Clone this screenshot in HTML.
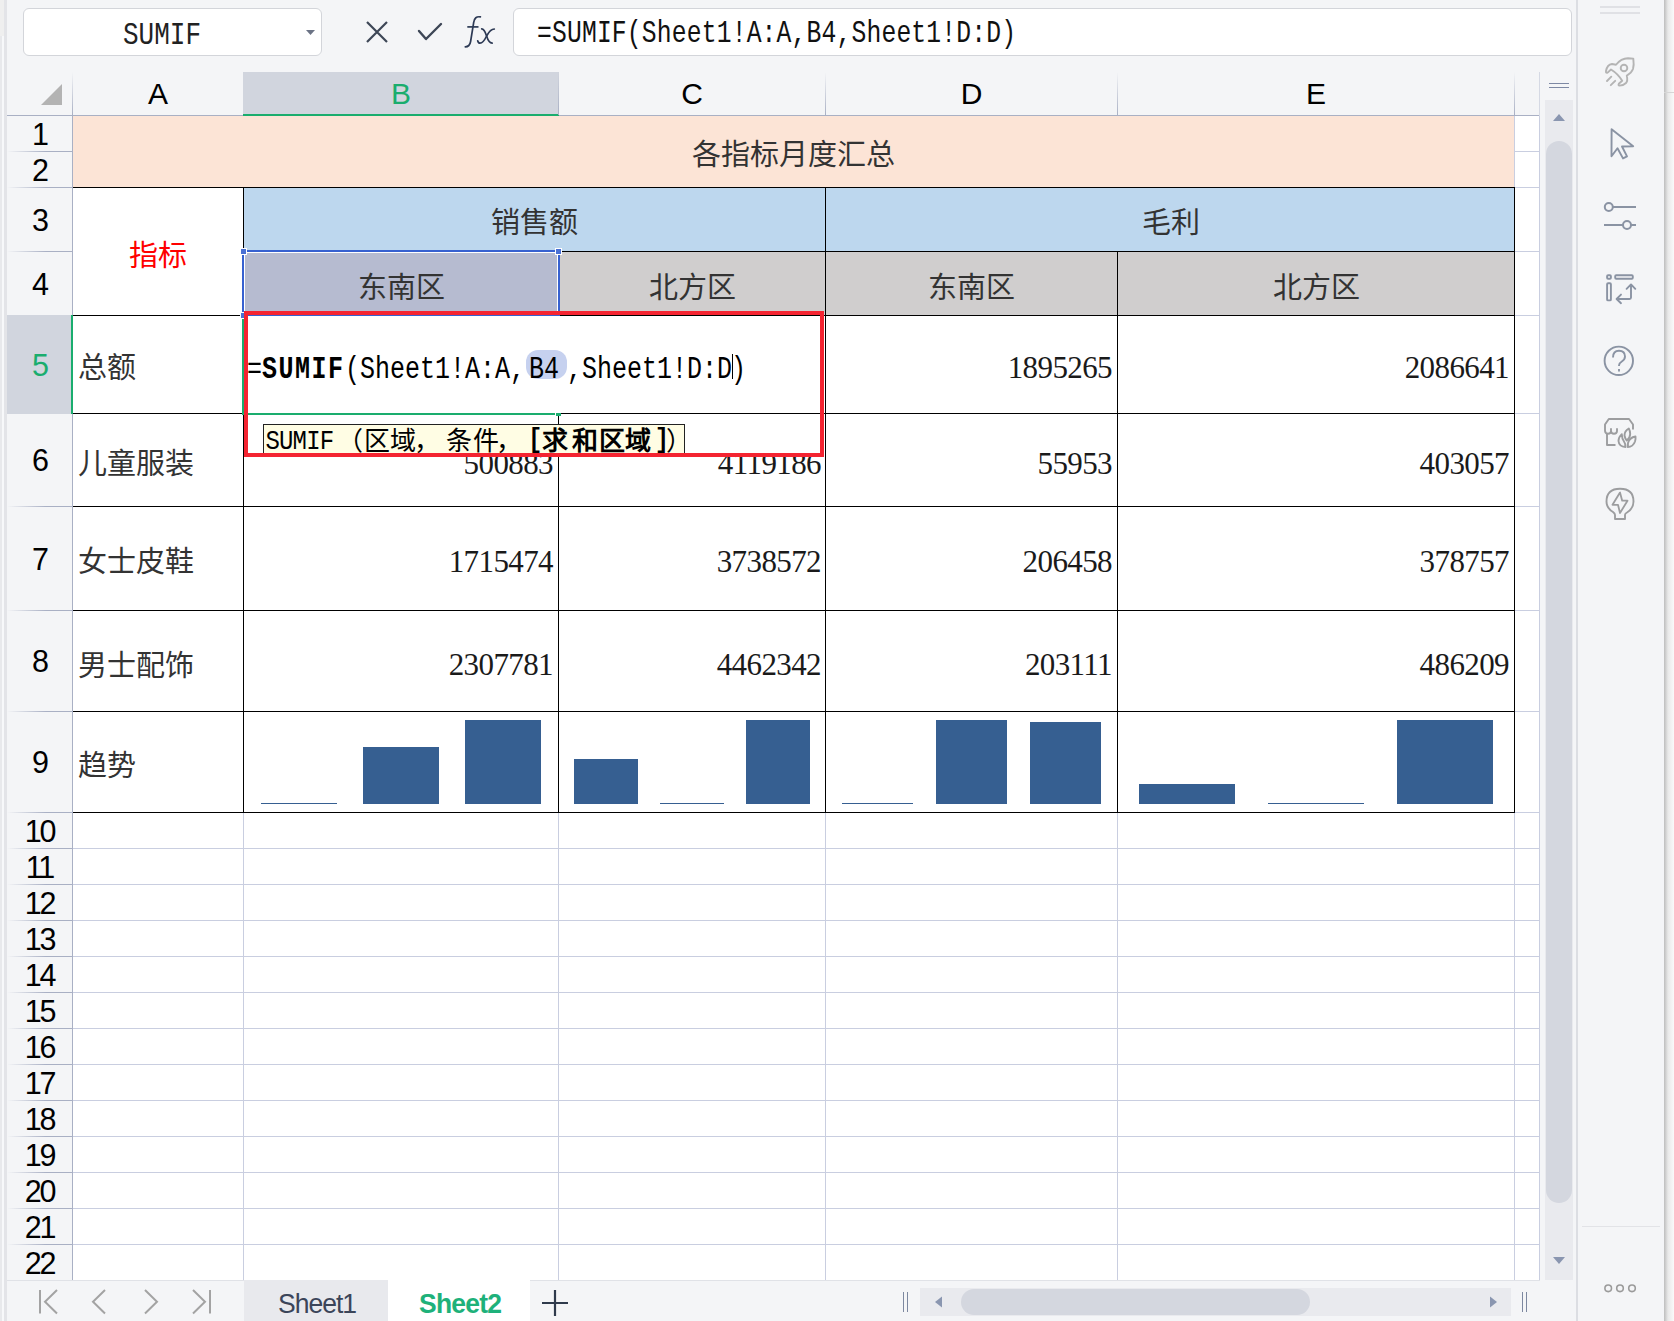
<!DOCTYPE html>
<html lang="zh-CN"><head><meta charset="utf-8"><title>Sheet</title>
<style>
html,body{margin:0;padding:0;}
body{width:1674px;height:1321px;overflow:hidden;position:relative;background:#f4f5f7;font-family:'Liberation Sans',sans-serif;}
</style></head><body>
<div style="position:absolute;left:0px;top:0px;width:2px;height:1321px;background:#e8e9ec"></div>
<div style="position:absolute;left:2px;top:0px;width:2px;height:1321px;background:#f7f8fa"></div>
<div style="position:absolute;left:0px;top:0px;width:4px;height:36px;background:#efefef"></div>
<div style="position:absolute;left:4px;top:0px;width:3px;height:1321px;background:#e3e4e8"></div>
<div style="position:absolute;left:73px;top:116px;width:1467px;height:1164px;background:#fff"></div>
<div style="position:absolute;left:243px;top:72px;width:316px;height:42px;background:#d1d5de"></div>
<div style="position:absolute;left:243px;top:114px;width:316px;height:2px;background:#1aad6e"></div>
<div style="position:absolute;left:7px;top:115px;width:236px;height:1px;background:#a9b0c4"></div>
<div style="position:absolute;left:559px;top:115px;width:981px;height:1px;background:#a9b0c4"></div>
<div style="position:absolute;left:558px;top:72px;width:1px;height:43px;background:linear-gradient(to bottom, rgba(169,176,196,0), #a9b0c4)"></div>
<div style="position:absolute;left:825px;top:72px;width:1px;height:43px;background:linear-gradient(to bottom, rgba(169,176,196,0), #a9b0c4)"></div>
<div style="position:absolute;left:1117px;top:72px;width:1px;height:43px;background:linear-gradient(to bottom, rgba(169,176,196,0), #a9b0c4)"></div>
<div style="position:absolute;left:1514px;top:72px;width:1px;height:43px;background:linear-gradient(to bottom, rgba(169,176,196,0), #a9b0c4)"></div>
<div style="position:absolute;left:1539px;top:72px;width:1px;height:43px;background:linear-gradient(to bottom, rgba(169,176,196,0), #a9b0c4)"></div>
<div style="position:absolute;left:72px;top:72px;width:1px;height:43px;background:linear-gradient(to bottom, rgba(169,176,196,0), #a9b0c4)"></div>
<div style="position:absolute;left:72px;top:115px;width:1px;height:1165px;background:#a9b0c4"></div>
<div style="position:absolute;left:7px;top:151px;width:65px;height:1px;background:linear-gradient(to right, rgba(169,176,196,0), #a9b0c4 60%)"></div>
<div style="position:absolute;left:7px;top:187px;width:65px;height:1px;background:linear-gradient(to right, rgba(169,176,196,0), #a9b0c4 60%)"></div>
<div style="position:absolute;left:7px;top:251px;width:65px;height:1px;background:linear-gradient(to right, rgba(169,176,196,0), #a9b0c4 60%)"></div>
<div style="position:absolute;left:7px;top:315px;width:65px;height:1px;background:linear-gradient(to right, rgba(169,176,196,0), #a9b0c4 60%)"></div>
<div style="position:absolute;left:7px;top:413px;width:65px;height:1px;background:linear-gradient(to right, rgba(169,176,196,0), #a9b0c4 60%)"></div>
<div style="position:absolute;left:7px;top:506px;width:65px;height:1px;background:linear-gradient(to right, rgba(169,176,196,0), #a9b0c4 60%)"></div>
<div style="position:absolute;left:7px;top:610px;width:65px;height:1px;background:linear-gradient(to right, rgba(169,176,196,0), #a9b0c4 60%)"></div>
<div style="position:absolute;left:7px;top:711px;width:65px;height:1px;background:linear-gradient(to right, rgba(169,176,196,0), #a9b0c4 60%)"></div>
<div style="position:absolute;left:7px;top:812px;width:65px;height:1px;background:linear-gradient(to right, rgba(169,176,196,0), #a9b0c4 60%)"></div>
<div style="position:absolute;left:7px;top:848px;width:65px;height:1px;background:linear-gradient(to right, rgba(169,176,196,0), #a9b0c4 60%)"></div>
<div style="position:absolute;left:7px;top:884px;width:65px;height:1px;background:linear-gradient(to right, rgba(169,176,196,0), #a9b0c4 60%)"></div>
<div style="position:absolute;left:7px;top:920px;width:65px;height:1px;background:linear-gradient(to right, rgba(169,176,196,0), #a9b0c4 60%)"></div>
<div style="position:absolute;left:7px;top:956px;width:65px;height:1px;background:linear-gradient(to right, rgba(169,176,196,0), #a9b0c4 60%)"></div>
<div style="position:absolute;left:7px;top:992px;width:65px;height:1px;background:linear-gradient(to right, rgba(169,176,196,0), #a9b0c4 60%)"></div>
<div style="position:absolute;left:7px;top:1028px;width:65px;height:1px;background:linear-gradient(to right, rgba(169,176,196,0), #a9b0c4 60%)"></div>
<div style="position:absolute;left:7px;top:1064px;width:65px;height:1px;background:linear-gradient(to right, rgba(169,176,196,0), #a9b0c4 60%)"></div>
<div style="position:absolute;left:7px;top:1100px;width:65px;height:1px;background:linear-gradient(to right, rgba(169,176,196,0), #a9b0c4 60%)"></div>
<div style="position:absolute;left:7px;top:1136px;width:65px;height:1px;background:linear-gradient(to right, rgba(169,176,196,0), #a9b0c4 60%)"></div>
<div style="position:absolute;left:7px;top:1172px;width:65px;height:1px;background:linear-gradient(to right, rgba(169,176,196,0), #a9b0c4 60%)"></div>
<div style="position:absolute;left:7px;top:1208px;width:65px;height:1px;background:linear-gradient(to right, rgba(169,176,196,0), #a9b0c4 60%)"></div>
<div style="position:absolute;left:7px;top:1244px;width:65px;height:1px;background:linear-gradient(to right, rgba(169,176,196,0), #a9b0c4 60%)"></div>
<div style="position:absolute;left:7px;top:1280px;width:65px;height:1px;background:linear-gradient(to right, rgba(169,176,196,0), #a9b0c4 60%)"></div>
<div style="position:absolute;left:7px;top:315px;width:64px;height:99px;background:#d1d5de"></div>
<div style="position:absolute;left:71px;top:315px;width:2px;height:99px;background:#1aad6e"></div>
<svg style="position:absolute;left:0;top:0" width="80" height="115"><polygon points="62,84 62,105 41,105" fill="#b3b3b3"/></svg>
<div style="position:absolute;left:1514px;top:151px;width:25px;height:1px;background:#c9cee0"></div>
<div style="position:absolute;left:1514px;top:187px;width:25px;height:1px;background:#c9cee0"></div>
<div style="position:absolute;left:1514px;top:251px;width:25px;height:1px;background:#c9cee0"></div>
<div style="position:absolute;left:1514px;top:315px;width:25px;height:1px;background:#c9cee0"></div>
<div style="position:absolute;left:1514px;top:413px;width:25px;height:1px;background:#c9cee0"></div>
<div style="position:absolute;left:1514px;top:506px;width:25px;height:1px;background:#c9cee0"></div>
<div style="position:absolute;left:1514px;top:610px;width:25px;height:1px;background:#c9cee0"></div>
<div style="position:absolute;left:1514px;top:711px;width:25px;height:1px;background:#c9cee0"></div>
<div style="position:absolute;left:1514px;top:812px;width:25px;height:1px;background:#c9cee0"></div>
<div style="position:absolute;left:73px;top:848px;width:1467px;height:1px;background:#c9cee0"></div>
<div style="position:absolute;left:73px;top:884px;width:1467px;height:1px;background:#c9cee0"></div>
<div style="position:absolute;left:73px;top:920px;width:1467px;height:1px;background:#c9cee0"></div>
<div style="position:absolute;left:73px;top:956px;width:1467px;height:1px;background:#c9cee0"></div>
<div style="position:absolute;left:73px;top:992px;width:1467px;height:1px;background:#c9cee0"></div>
<div style="position:absolute;left:73px;top:1028px;width:1467px;height:1px;background:#c9cee0"></div>
<div style="position:absolute;left:73px;top:1064px;width:1467px;height:1px;background:#c9cee0"></div>
<div style="position:absolute;left:73px;top:1100px;width:1467px;height:1px;background:#c9cee0"></div>
<div style="position:absolute;left:73px;top:1136px;width:1467px;height:1px;background:#c9cee0"></div>
<div style="position:absolute;left:73px;top:1172px;width:1467px;height:1px;background:#c9cee0"></div>
<div style="position:absolute;left:73px;top:1208px;width:1467px;height:1px;background:#c9cee0"></div>
<div style="position:absolute;left:73px;top:1244px;width:1467px;height:1px;background:#c9cee0"></div>
<div style="position:absolute;left:73px;top:1280px;width:1467px;height:1px;background:#c9cee0"></div>
<div style="position:absolute;left:243px;top:812px;width:1px;height:468px;background:#c9cee0"></div>
<div style="position:absolute;left:558px;top:812px;width:1px;height:468px;background:#c9cee0"></div>
<div style="position:absolute;left:825px;top:812px;width:1px;height:468px;background:#c9cee0"></div>
<div style="position:absolute;left:1117px;top:812px;width:1px;height:468px;background:#c9cee0"></div>
<div style="position:absolute;left:1514px;top:812px;width:1px;height:468px;background:#c9cee0"></div>
<div style="position:absolute;left:1539px;top:72px;width:1px;height:44px;background:#d5d9e4"></div>
<div style="position:absolute;left:1539px;top:116px;width:1px;height:1164px;background:#c9cee0"></div>
<div style="position:absolute;left:1514px;top:116px;width:1px;height:71px;background:#c9cee0"></div>
<div style="position:absolute;left:73px;top:116px;width:1441px;height:71px;background:#fce4d6"></div>
<div style="position:absolute;left:244px;top:188px;width:1270px;height:63px;background:#bdd7ee"></div>
<div style="position:absolute;left:244px;top:252px;width:1270px;height:63px;background:#d0cece"></div>
<div style="position:absolute;left:244px;top:252px;width:314px;height:63px;background:#b6bbd0"></div>
<div style="position:absolute;left:73px;top:187px;width:1442px;height:1px;background:#000"></div>
<div style="position:absolute;left:243px;top:251px;width:1272px;height:1px;background:#000"></div>
<div style="position:absolute;left:73px;top:315px;width:1442px;height:1px;background:#000"></div>
<div style="position:absolute;left:73px;top:413px;width:1442px;height:1px;background:#000"></div>
<div style="position:absolute;left:73px;top:506px;width:1442px;height:1px;background:#000"></div>
<div style="position:absolute;left:73px;top:610px;width:1442px;height:1px;background:#000"></div>
<div style="position:absolute;left:73px;top:711px;width:1442px;height:1px;background:#000"></div>
<div style="position:absolute;left:73px;top:812px;width:1442px;height:1px;background:#000"></div>
<div style="position:absolute;left:243px;top:187px;width:1px;height:626px;background:#000"></div>
<div style="position:absolute;left:558px;top:251px;width:1px;height:562px;background:#000"></div>
<div style="position:absolute;left:825px;top:187px;width:1px;height:626px;background:#000"></div>
<div style="position:absolute;left:1117px;top:251px;width:1px;height:562px;background:#000"></div>
<div style="position:absolute;left:1514px;top:187px;width:1px;height:626px;background:#000"></div>
<div style="position:absolute;left:58.0px;top:72px;width:200px;text-align:center;white-space:nowrap;font-family:'Liberation Sans',sans-serif;font-size:30px;line-height:44px;color:#000;color:#000;">A</div>
<div style="position:absolute;left:301.0px;top:72px;width:200px;text-align:center;white-space:nowrap;font-family:'Liberation Sans',sans-serif;font-size:30px;line-height:44px;color:#000;color:#1aad6e;">B</div>
<div style="position:absolute;left:592.0px;top:72px;width:200px;text-align:center;white-space:nowrap;font-family:'Liberation Sans',sans-serif;font-size:30px;line-height:44px;color:#000;color:#000;">C</div>
<div style="position:absolute;left:871.5px;top:72px;width:200px;text-align:center;white-space:nowrap;font-family:'Liberation Sans',sans-serif;font-size:30px;line-height:44px;color:#000;color:#000;">D</div>
<div style="position:absolute;left:1216.0px;top:72px;width:200px;text-align:center;white-space:nowrap;font-family:'Liberation Sans',sans-serif;font-size:30px;line-height:44px;color:#000;color:#000;">E</div>
<div style="position:absolute;left:7px;top:115px;width:65px;height:36px;display:flex;align-items:center;justify-content:center;padding-top:2px;box-sizing:border-box;font-family:'Liberation Sans',sans-serif;font-size:30.5px;color:#000;letter-spacing:-2.2px;color:#000;">1</div>
<div style="position:absolute;left:7px;top:151px;width:65px;height:36px;display:flex;align-items:center;justify-content:center;padding-top:2px;box-sizing:border-box;font-family:'Liberation Sans',sans-serif;font-size:30.5px;color:#000;letter-spacing:-2.2px;color:#000;">2</div>
<div style="position:absolute;left:7px;top:187px;width:65px;height:64px;display:flex;align-items:center;justify-content:center;padding-top:2px;box-sizing:border-box;font-family:'Liberation Sans',sans-serif;font-size:30.5px;color:#000;letter-spacing:-2.2px;color:#000;">3</div>
<div style="position:absolute;left:7px;top:251px;width:65px;height:64px;display:flex;align-items:center;justify-content:center;padding-top:2px;box-sizing:border-box;font-family:'Liberation Sans',sans-serif;font-size:30.5px;color:#000;letter-spacing:-2.2px;color:#000;">4</div>
<div style="position:absolute;left:7px;top:315px;width:65px;height:98px;display:flex;align-items:center;justify-content:center;padding-top:2px;box-sizing:border-box;font-family:'Liberation Sans',sans-serif;font-size:30.5px;color:#000;letter-spacing:-2.2px;color:#1aad6e;">5</div>
<div style="position:absolute;left:7px;top:413px;width:65px;height:93px;display:flex;align-items:center;justify-content:center;padding-top:2px;box-sizing:border-box;font-family:'Liberation Sans',sans-serif;font-size:30.5px;color:#000;letter-spacing:-2.2px;color:#000;">6</div>
<div style="position:absolute;left:7px;top:506px;width:65px;height:104px;display:flex;align-items:center;justify-content:center;padding-top:2px;box-sizing:border-box;font-family:'Liberation Sans',sans-serif;font-size:30.5px;color:#000;letter-spacing:-2.2px;color:#000;">7</div>
<div style="position:absolute;left:7px;top:610px;width:65px;height:101px;display:flex;align-items:center;justify-content:center;padding-top:2px;box-sizing:border-box;font-family:'Liberation Sans',sans-serif;font-size:30.5px;color:#000;letter-spacing:-2.2px;color:#000;">8</div>
<div style="position:absolute;left:7px;top:711px;width:65px;height:101px;display:flex;align-items:center;justify-content:center;padding-top:2px;box-sizing:border-box;font-family:'Liberation Sans',sans-serif;font-size:30.5px;color:#000;letter-spacing:-2.2px;color:#000;">9</div>
<div style="position:absolute;left:7px;top:812px;width:65px;height:36px;display:flex;align-items:center;justify-content:center;padding-top:2px;box-sizing:border-box;font-family:'Liberation Sans',sans-serif;font-size:30.5px;color:#000;letter-spacing:-2.2px;color:#000;">10</div>
<div style="position:absolute;left:7px;top:848px;width:65px;height:36px;display:flex;align-items:center;justify-content:center;padding-top:2px;box-sizing:border-box;font-family:'Liberation Sans',sans-serif;font-size:30.5px;color:#000;letter-spacing:-2.2px;color:#000;">11</div>
<div style="position:absolute;left:7px;top:884px;width:65px;height:36px;display:flex;align-items:center;justify-content:center;padding-top:2px;box-sizing:border-box;font-family:'Liberation Sans',sans-serif;font-size:30.5px;color:#000;letter-spacing:-2.2px;color:#000;">12</div>
<div style="position:absolute;left:7px;top:920px;width:65px;height:36px;display:flex;align-items:center;justify-content:center;padding-top:2px;box-sizing:border-box;font-family:'Liberation Sans',sans-serif;font-size:30.5px;color:#000;letter-spacing:-2.2px;color:#000;">13</div>
<div style="position:absolute;left:7px;top:956px;width:65px;height:36px;display:flex;align-items:center;justify-content:center;padding-top:2px;box-sizing:border-box;font-family:'Liberation Sans',sans-serif;font-size:30.5px;color:#000;letter-spacing:-2.2px;color:#000;">14</div>
<div style="position:absolute;left:7px;top:992px;width:65px;height:36px;display:flex;align-items:center;justify-content:center;padding-top:2px;box-sizing:border-box;font-family:'Liberation Sans',sans-serif;font-size:30.5px;color:#000;letter-spacing:-2.2px;color:#000;">15</div>
<div style="position:absolute;left:7px;top:1028px;width:65px;height:36px;display:flex;align-items:center;justify-content:center;padding-top:2px;box-sizing:border-box;font-family:'Liberation Sans',sans-serif;font-size:30.5px;color:#000;letter-spacing:-2.2px;color:#000;">16</div>
<div style="position:absolute;left:7px;top:1064px;width:65px;height:36px;display:flex;align-items:center;justify-content:center;padding-top:2px;box-sizing:border-box;font-family:'Liberation Sans',sans-serif;font-size:30.5px;color:#000;letter-spacing:-2.2px;color:#000;">17</div>
<div style="position:absolute;left:7px;top:1100px;width:65px;height:36px;display:flex;align-items:center;justify-content:center;padding-top:2px;box-sizing:border-box;font-family:'Liberation Sans',sans-serif;font-size:30.5px;color:#000;letter-spacing:-2.2px;color:#000;">18</div>
<div style="position:absolute;left:7px;top:1136px;width:65px;height:36px;display:flex;align-items:center;justify-content:center;padding-top:2px;box-sizing:border-box;font-family:'Liberation Sans',sans-serif;font-size:30.5px;color:#000;letter-spacing:-2.2px;color:#000;">19</div>
<div style="position:absolute;left:7px;top:1172px;width:65px;height:36px;display:flex;align-items:center;justify-content:center;padding-top:2px;box-sizing:border-box;font-family:'Liberation Sans',sans-serif;font-size:30.5px;color:#000;letter-spacing:-2.2px;color:#000;">20</div>
<div style="position:absolute;left:7px;top:1208px;width:65px;height:36px;display:flex;align-items:center;justify-content:center;padding-top:2px;box-sizing:border-box;font-family:'Liberation Sans',sans-serif;font-size:30.5px;color:#000;letter-spacing:-2.2px;color:#000;">21</div>
<div style="position:absolute;left:7px;top:1244px;width:65px;height:36px;display:flex;align-items:center;justify-content:center;padding-top:2px;box-sizing:border-box;font-family:'Liberation Sans',sans-serif;font-size:30.5px;color:#000;letter-spacing:-2.2px;color:#000;">22</div>
<div style="position:absolute;left:593.5px;top:137px;width:400px;text-align:center;white-space:nowrap;font-family:'Liberation Sans',sans-serif;font-size:29px;line-height:36px;color:#333;">各指标月度汇总</div>
<div style="position:absolute;left:73.0px;top:238px;width:170px;text-align:center;white-space:nowrap;font-family:'Liberation Sans',sans-serif;font-size:29px;line-height:36px;color:#333;color:#f00;">指标</div>
<div style="position:absolute;left:384.5px;top:205px;width:300px;text-align:center;white-space:nowrap;font-family:'Liberation Sans',sans-serif;font-size:29px;line-height:36px;color:#333;">销售额</div>
<div style="position:absolute;left:1021.0px;top:205px;width:300px;text-align:center;white-space:nowrap;font-family:'Liberation Sans',sans-serif;font-size:29px;line-height:36px;color:#333;">毛利</div>
<div style="position:absolute;left:301.0px;top:270px;width:200px;text-align:center;white-space:nowrap;font-family:'Liberation Sans',sans-serif;font-size:29px;line-height:36px;color:#333;">东南区</div>
<div style="position:absolute;left:592.0px;top:270px;width:200px;text-align:center;white-space:nowrap;font-family:'Liberation Sans',sans-serif;font-size:29px;line-height:36px;color:#333;">北方区</div>
<div style="position:absolute;left:871.5px;top:270px;width:200px;text-align:center;white-space:nowrap;font-family:'Liberation Sans',sans-serif;font-size:29px;line-height:36px;color:#333;">东南区</div>
<div style="position:absolute;left:1216.0px;top:270px;width:200px;text-align:center;white-space:nowrap;font-family:'Liberation Sans',sans-serif;font-size:29px;line-height:36px;color:#333;">北方区</div>
<div style="position:absolute;left:78px;top:350px;white-space:nowrap;font-family:'Liberation Sans',sans-serif;font-size:29px;line-height:36px;color:#333;">总额</div>
<div style="position:absolute;left:78px;top:446px;white-space:nowrap;font-family:'Liberation Sans',sans-serif;font-size:29px;line-height:36px;color:#333;">儿童服装</div>
<div style="position:absolute;left:78px;top:544px;white-space:nowrap;font-family:'Liberation Sans',sans-serif;font-size:29px;line-height:36px;color:#333;">女士皮鞋</div>
<div style="position:absolute;left:78px;top:648px;white-space:nowrap;font-family:'Liberation Sans',sans-serif;font-size:29px;line-height:36px;color:#333;">男士配饰</div>
<div style="position:absolute;left:78px;top:748px;white-space:nowrap;font-family:'Liberation Sans',sans-serif;font-size:29px;line-height:36px;color:#333;">趋势</div>
<div style="position:absolute;left:512px;top:347.5px;width:600px;text-align:right;white-space:nowrap;font-family:'Liberation Serif',serif;font-size:31px;line-height:40px;letter-spacing:-0.6px;color:#1a1a1a;">1895265</div>
<div style="position:absolute;left:909px;top:347.5px;width:600px;text-align:right;white-space:nowrap;font-family:'Liberation Serif',serif;font-size:31px;line-height:40px;letter-spacing:-0.6px;color:#1a1a1a;">2086641</div>
<div style="position:absolute;left:-47px;top:443.5px;width:600px;text-align:right;white-space:nowrap;font-family:'Liberation Serif',serif;font-size:31px;line-height:40px;letter-spacing:-0.6px;color:#1a1a1a;">500883</div>
<div style="position:absolute;left:221px;top:443.5px;width:600px;text-align:right;white-space:nowrap;font-family:'Liberation Serif',serif;font-size:31px;line-height:40px;letter-spacing:-0.6px;color:#1a1a1a;">4119186</div>
<div style="position:absolute;left:512px;top:443.5px;width:600px;text-align:right;white-space:nowrap;font-family:'Liberation Serif',serif;font-size:31px;line-height:40px;letter-spacing:-0.6px;color:#1a1a1a;">55953</div>
<div style="position:absolute;left:909px;top:443.5px;width:600px;text-align:right;white-space:nowrap;font-family:'Liberation Serif',serif;font-size:31px;line-height:40px;letter-spacing:-0.6px;color:#1a1a1a;">403057</div>
<div style="position:absolute;left:-47px;top:541.5px;width:600px;text-align:right;white-space:nowrap;font-family:'Liberation Serif',serif;font-size:31px;line-height:40px;letter-spacing:-0.6px;color:#1a1a1a;">1715474</div>
<div style="position:absolute;left:221px;top:541.5px;width:600px;text-align:right;white-space:nowrap;font-family:'Liberation Serif',serif;font-size:31px;line-height:40px;letter-spacing:-0.6px;color:#1a1a1a;">3738572</div>
<div style="position:absolute;left:512px;top:541.5px;width:600px;text-align:right;white-space:nowrap;font-family:'Liberation Serif',serif;font-size:31px;line-height:40px;letter-spacing:-0.6px;color:#1a1a1a;">206458</div>
<div style="position:absolute;left:909px;top:541.5px;width:600px;text-align:right;white-space:nowrap;font-family:'Liberation Serif',serif;font-size:31px;line-height:40px;letter-spacing:-0.6px;color:#1a1a1a;">378757</div>
<div style="position:absolute;left:-47px;top:644.5px;width:600px;text-align:right;white-space:nowrap;font-family:'Liberation Serif',serif;font-size:31px;line-height:40px;letter-spacing:-0.6px;color:#1a1a1a;">2307781</div>
<div style="position:absolute;left:221px;top:644.5px;width:600px;text-align:right;white-space:nowrap;font-family:'Liberation Serif',serif;font-size:31px;line-height:40px;letter-spacing:-0.6px;color:#1a1a1a;">4462342</div>
<div style="position:absolute;left:512px;top:644.5px;width:600px;text-align:right;white-space:nowrap;font-family:'Liberation Serif',serif;font-size:31px;line-height:40px;letter-spacing:-0.6px;color:#1a1a1a;">203111</div>
<div style="position:absolute;left:909px;top:644.5px;width:600px;text-align:right;white-space:nowrap;font-family:'Liberation Serif',serif;font-size:31px;line-height:40px;letter-spacing:-0.6px;color:#1a1a1a;">486209</div>
<div style="position:absolute;left:261px;top:803px;width:76px;height:1px;background:#365f91"></div>
<div style="position:absolute;left:363px;top:747px;width:76px;height:57px;background:#365f91"></div>
<div style="position:absolute;left:465px;top:720px;width:76px;height:84px;background:#365f91"></div>
<div style="position:absolute;left:574px;top:759px;width:64px;height:45px;background:#365f91"></div>
<div style="position:absolute;left:660px;top:803px;width:64px;height:1px;background:#365f91"></div>
<div style="position:absolute;left:746px;top:720px;width:64px;height:84px;background:#365f91"></div>
<div style="position:absolute;left:842px;top:803px;width:71px;height:1px;background:#365f91"></div>
<div style="position:absolute;left:936px;top:720px;width:71px;height:84px;background:#365f91"></div>
<div style="position:absolute;left:1030px;top:722px;width:71px;height:82px;background:#365f91"></div>
<div style="position:absolute;left:1139px;top:784px;width:96px;height:20px;background:#365f91"></div>
<div style="position:absolute;left:1268px;top:803px;width:96px;height:1px;background:#365f91"></div>
<div style="position:absolute;left:1397px;top:720px;width:96px;height:84px;background:#365f91"></div>
<div style="position:absolute;left:244px;top:316px;width:576px;height:97px;background:#fff"></div>
<div style="position:absolute;left:244px;top:252px;width:314px;height:1px;background:#fff"></div>
<div style="position:absolute;left:244px;top:252px;width:1px;height:63px;background:#fff"></div>
<div style="position:absolute;left:557px;top:252px;width:1px;height:63px;background:#fff"></div>
<div style="position:absolute;left:242px;top:250px;width:318px;height:2px;background:#3761d0"></div>
<div style="position:absolute;left:242px;top:250px;width:2px;height:66px;background:#3761d0"></div>
<div style="position:absolute;left:558px;top:250px;width:2px;height:66px;background:#3761d0"></div>
<div style="position:absolute;left:244px;top:315px;width:316px;height:1px;background:#3761d0"></div>
<div style="position:absolute;left:241px;top:249px;width:5px;height:5px;background:#4a70d4;outline:1px solid #fff"></div>
<div style="position:absolute;left:556px;top:249px;width:5px;height:5px;background:#4a70d4;outline:1px solid #fff"></div>
<div style="position:absolute;left:241px;top:313px;width:5px;height:5px;background:#4a70d4;outline:1px solid #fff"></div>
<div style="position:absolute;left:242px;top:319px;width:2px;height:96px;background:#1aad6e"></div>
<div style="position:absolute;left:244px;top:413px;width:311px;height:2px;background:#1aad6e"></div>
<div style="position:absolute;left:555px;top:413px;width:1px;height:3px;background:#fff"></div>
<div style="position:absolute;left:556px;top:413px;width:5px;height:3px;background:#1aad6e"></div>
<div style="position:absolute;left:526px;top:350px;width:41px;height:29px;background:#c6d1ef;border-radius:12px"></div>
<div style="position:absolute;left:247px;top:352px;white-space:nowrap;font-family:'Liberation Mono',monospace;font-size:25px;line-height:40px;color:#000;transform:scaleY(1.29);transform-origin:0 25px;">=</div>
<div style="position:absolute;left:262px;top:352px;white-space:nowrap;font-family:'Liberation Mono',monospace;font-size:25px;line-height:40px;color:#000;transform:scaleY(1.29);transform-origin:0 25px;font-weight:bold;letter-spacing:1.5px;">SUMIF</div>
<div style="position:absolute;left:345px;top:352px;white-space:nowrap;font-family:'Liberation Mono',monospace;font-size:25px;line-height:40px;color:#000;transform:scaleY(1.29);transform-origin:0 25px;">(Sheet1!A:A,</div>
<div style="position:absolute;left:529px;top:352px;white-space:nowrap;font-family:'Liberation Mono',monospace;font-size:25px;line-height:40px;color:#000;transform:scaleY(1.29);transform-origin:0 25px;">B4</div>
<div style="position:absolute;left:567px;top:352px;white-space:nowrap;font-family:'Liberation Mono',monospace;font-size:25px;line-height:40px;color:#000;transform:scaleY(1.29);transform-origin:0 25px;">,Sheet1!D:D</div>
<div style="position:absolute;left:731px;top:352px;white-space:nowrap;font-family:'Liberation Mono',monospace;font-size:25px;line-height:40px;color:#000;transform:scaleY(1.29);transform-origin:0 25px;">)</div>
<div style="position:absolute;left:732px;top:354px;width:1px;height:25px;background:#000"></div>
<div style="position:absolute;left:263px;top:424px;width:422px;height:32px;background:#fffde4;border:1px solid #222;box-sizing:border-box;"></div>
<div style="position:absolute;left:265.5px;top:427.5px;white-space:nowrap;font-family:'Liberation Mono',monospace;font-size:24px;line-height:30px;transform:scaleY(1.18);transform-origin:0 22px;color:#000;width:13.5px;text-align:center;">S</div>
<div style="position:absolute;left:279.05px;top:427.5px;white-space:nowrap;font-family:'Liberation Mono',monospace;font-size:24px;line-height:30px;transform:scaleY(1.18);transform-origin:0 22px;color:#000;width:13.5px;text-align:center;">U</div>
<div style="position:absolute;left:292.6px;top:427.5px;white-space:nowrap;font-family:'Liberation Mono',monospace;font-size:24px;line-height:30px;transform:scaleY(1.18);transform-origin:0 22px;color:#000;width:13.5px;text-align:center;">M</div>
<div style="position:absolute;left:306.15px;top:427.5px;white-space:nowrap;font-family:'Liberation Mono',monospace;font-size:24px;line-height:30px;transform:scaleY(1.18);transform-origin:0 22px;color:#000;width:13.5px;text-align:center;">I</div>
<div style="position:absolute;left:319.7px;top:427.5px;white-space:nowrap;font-family:'Liberation Mono',monospace;font-size:24px;line-height:30px;transform:scaleY(1.18);transform-origin:0 22px;color:#000;width:13.5px;text-align:center;">F</div>
<div style="position:absolute;left:336.9px;top:426px;white-space:nowrap;font-family:'Liberation Sans',sans-serif;font-size:26px;line-height:30px;color:#000;">（</div>
<div style="position:absolute;left:364.4px;top:426px;white-space:nowrap;font-family:'Liberation Sans',sans-serif;font-size:26px;line-height:30px;color:#000;">区</div>
<div style="position:absolute;left:390.4px;top:426px;white-space:nowrap;font-family:'Liberation Sans',sans-serif;font-size:26px;line-height:30px;color:#000;">域</div>
<div style="position:absolute;left:414.0px;top:426px;white-space:nowrap;font-family:'Liberation Sans',sans-serif;font-size:26px;line-height:30px;color:#000;">，</div>
<div style="position:absolute;left:445.8px;top:426px;white-space:nowrap;font-family:'Liberation Sans',sans-serif;font-size:26px;line-height:30px;color:#000;">条</div>
<div style="position:absolute;left:472.6px;top:426px;white-space:nowrap;font-family:'Liberation Sans',sans-serif;font-size:26px;line-height:30px;color:#000;">件</div>
<div style="position:absolute;left:496.2px;top:426px;white-space:nowrap;font-family:'Liberation Sans',sans-serif;font-size:26px;line-height:30px;color:#000;">，</div>
<div style="position:absolute;left:528px;top:426px;white-space:nowrap;font-family:'Liberation Mono',monospace;font-size:24px;line-height:30px;transform:scaleY(1.18);transform-origin:0 22px;color:#000;font-weight:bold;">[</div>
<div style="position:absolute;left:542.4px;top:426px;white-space:nowrap;font-family:'Liberation Sans',sans-serif;font-size:26px;line-height:30px;color:#000;font-weight:bold;">求</div>
<div style="position:absolute;left:571.8px;top:426px;white-space:nowrap;font-family:'Liberation Sans',sans-serif;font-size:26px;line-height:30px;color:#000;font-weight:bold;">和</div>
<div style="position:absolute;left:599px;top:426px;white-space:nowrap;font-family:'Liberation Sans',sans-serif;font-size:26px;line-height:30px;color:#000;font-weight:bold;">区</div>
<div style="position:absolute;left:625.3px;top:426px;white-space:nowrap;font-family:'Liberation Sans',sans-serif;font-size:26px;line-height:30px;color:#000;font-weight:bold;">域</div>
<div style="position:absolute;left:654.8px;top:426px;white-space:nowrap;font-family:'Liberation Mono',monospace;font-size:24px;line-height:30px;transform:scaleY(1.18);transform-origin:0 22px;color:#000;font-weight:bold;">]</div>
<div style="position:absolute;left:665.5px;top:426px;white-space:nowrap;font-family:'Liberation Sans',sans-serif;font-size:26px;line-height:30px;color:#000;">）</div>
<div style="position:absolute;left:244px;top:311px;width:580px;height:146px;border:4px solid #f42431;box-sizing:border-box"></div>
<div style="position:absolute;left:23px;top:8px;width:299px;height:48px;background:#fff;border:1px solid #d3d5da;border-radius:6px;box-sizing:border-box"></div>
<div style="position:absolute;left:123px;top:16.5px;white-space:nowrap;font-family:'Liberation Mono',monospace;font-size:26px;line-height:40px;color:#222;transform:scaleY(1.24);transform-origin:0 26px;">SUMIF</div>
<svg style="position:absolute;left:300px;top:26px" width="20" height="12"><polygon points="6,4 15,4 10.5,9" fill="#6b7385"/></svg>
<svg style="position:absolute;left:360px;top:16px" width="140" height="36"><path d="M7,6 L27,26 M27,6 L7,26" stroke="#3d4656" stroke-width="2.2" fill="none"/><path d="M59,15 L66,23 L81,8" stroke="#3d4656" stroke-width="2.4" fill="none" stroke-linecap="round" stroke-linejoin="round"/></svg>
<svg style="position:absolute;left:455px;top:8px" width="50" height="47"><path d="M25.4,8.9 C21.5,8.2 19.3,10 18.7,14.5 L15.6,33.5 C15,37 13,38.8 10.3,38.8" fill="none" stroke="#2d3a55" stroke-width="1.7" stroke-linecap="round"/><path d="M12.3,18.9 L23.5,18.9" stroke="#2d3a55" stroke-width="1.7"/><path d="M26.7,20.9 C29.2,21 30.2,23.5 31.6,28 C33,32.5 34.2,35 37.2,35.2" fill="none" stroke="#2d3a55" stroke-width="1.7" stroke-linecap="round"/><path d="M39.3,21 C36,21 34,23.5 31.6,28 C29.3,32.8 27.5,35.2 25,35.2 C23.6,35.2 23,34.2 22.7,32.8" fill="none" stroke="#2d3a55" stroke-width="1.7" stroke-linecap="round"/></svg>
<div style="position:absolute;left:513px;top:8px;width:1059px;height:48px;background:#fff;border:1px solid #d3d5da;border-radius:6px;box-sizing:border-box"></div>
<div style="position:absolute;left:537px;top:14.5px;white-space:nowrap;font-family:'Liberation Mono',monospace;font-size:24.7px;line-height:40px;color:#111;letter-spacing:0.16px;transform:scaleY(1.3);transform-origin:0 26px;">=SUMIF(Sheet1!A:A,B4,Sheet1!D:D)</div>
<div style="position:absolute;left:1549px;top:83px;width:20px;height:1px;background:#7e89a4"></div>
<div style="position:absolute;left:1549px;top:87px;width:20px;height:1px;background:#7e89a4"></div>
<div style="position:absolute;left:1545px;top:100px;width:28px;height:1180px;background:#e9eaee"></div>
<svg style="position:absolute;left:1545px;top:100px" width="28" height="30"><polygon points="14,14 20,21 8,21" fill="#8a96b0"/></svg>
<div style="position:absolute;left:1546px;top:141px;width:26px;height:1062px;background:#d4d7df;border-radius:13px"></div>
<svg style="position:absolute;left:1545px;top:1250px" width="28" height="20"><polygon points="8,7 20,7 14,14" fill="#8a96b0"/></svg>
<div style="position:absolute;left:1576px;top:0px;width:2px;height:1321px;background:#dcdee3"></div>
<div style="position:absolute;left:1578px;top:0px;width:86px;height:1321px;background:#f4f5f7"></div>
<div style="position:absolute;left:1664px;top:0px;width:10px;height:1321px;background:linear-gradient(to right,#bdbdbd,#e9e9e9 40%,#fafafa)"></div>
<div style="position:absolute;left:1664px;top:92px;width:10px;height:1px;background:#d6d6d6"></div>
<div style="position:absolute;left:1600px;top:6px;width:40px;height:2px;background:#e0e1e5"></div>
<div style="position:absolute;left:1600px;top:12px;width:40px;height:2px;background:#e0e1e5"></div>
<div style="position:absolute;left:1582px;top:1226px;width:78px;height:1px;background:#e2e3e7"></div>
<svg style="position:absolute;left:1598px;top:50px" width="44" height="44" viewBox="0 0 44 44"><path d="M13,19.5 L9.6,22.6 Q7.6,23.4 8,21 Q9.2,14.6 14,14 L18,14.8 Q23,8.2 30,8.2 L35.3,8.6 Q36.2,15 35,19 Q33.5,23 28.8,25.6 Q30,31 28,33 Q25.5,35.5 21.5,35.6 Q20,35.4 20.8,33.8 L24.2,30.8 Q20,23.8 13,19.5 Z" fill="none" stroke="#b4b4b4" stroke-width="1.9" stroke-linejoin="round"/><circle cx="26" cy="18" r="3.3" fill="none" stroke="#b4b4b4" stroke-width="1.9"/><path d="M9,31 L13.3,26.7 M12.8,35.2 L17.2,30.8" stroke="#b4b4b4" stroke-width="1.9" stroke-linecap="round"/></svg>
<svg style="position:absolute;left:1598px;top:120px" width="44" height="44" viewBox="0 0 44 44"><path d="M13.6,9.2 L35.2,26.2 L24,26.5 L29,36.4 L25,38.4 L19.5,28.3 L13.5,36.3 Z" fill="none" stroke="#8a93a3" stroke-width="1.9" stroke-linejoin="round"/></svg>
<svg style="position:absolute;left:1600px;top:190px" width="40" height="45" viewBox="0 0 40 45"><circle cx="8.8" cy="17" r="4" fill="none" stroke="#8a93a3" stroke-width="2"/><path d="M12.8,17 L36,17" stroke="#8a93a3" stroke-width="2"/><circle cx="27" cy="35" r="4" fill="none" stroke="#8a93a3" stroke-width="2"/><path d="M4,35 L23,35 M31,35 L36,35" stroke="#8a93a3" stroke-width="2"/></svg>
<svg style="position:absolute;left:1598px;top:266px" width="44" height="44" viewBox="0 0 44 44"><rect x="9.1" y="9.2" width="3.8" height="3.5" rx="1" fill="none" stroke="#8a93a3" stroke-width="1.9"/><rect x="17.2" y="9.2" width="17.6" height="3.5" rx="1" fill="none" stroke="#8a93a3" stroke-width="1.9"/><rect x="9.1" y="17.2" width="3.8" height="17.2" rx="1" fill="none" stroke="#8a93a3" stroke-width="1.9"/><path d="M33,19 L33,31.5 Q33,33 31.5,33 L19,33 M28.6,22.8 L33,18.4 L37.3,22.8 M23,28.6 L18.6,33 L23,37.2" fill="none" stroke="#8a93a3" stroke-width="1.9" stroke-linecap="round" stroke-linejoin="round"/></svg>
<svg style="position:absolute;left:1598px;top:338px" width="44" height="44" viewBox="0 0 44 44"><circle cx="20.8" cy="22.8" r="14.2" fill="none" stroke="#8a93a3" stroke-width="1.9"/><path d="M15,19.5 Q15,12.8 21,12.8 Q27,12.8 27,18.5 Q27,21.5 23.8,23.5 Q21,25.2 21,27.5 L21,28" fill="none" stroke="#8a93a3" stroke-width="1.9" stroke-linecap="butt"/><path d="M21,31 L21,33.5" stroke="#8a93a3" stroke-width="1.9"/></svg>
<svg style="position:absolute;left:1598px;top:410px" width="44" height="44" viewBox="0 0 44 44"><path d="M17.5,35 L9,35 L9,23.5" fill="none" stroke="#9c9d9f" stroke-width="1.9" stroke-linejoin="round"/><path d="M13,18.2 L13,21 Q13,23.7 10,23.7 Q7,23.7 7,20.5 L7,14.5 L10.8,9 L31,9 L35,14.5 L35,19.5" fill="none" stroke="#9c9d9f" stroke-width="1.9" stroke-linejoin="round"/><path d="M13,21 Q13,23.7 16,23.7 Q19,23.7 19,21 L19,18.2" fill="none" stroke="#9c9d9f" stroke-width="1.9"/><path d="M27.5,37 Q21,36.5 20.5,31 Q20.5,27 23.8,24.2 Q24,29 26,31.5 Q27.5,33.5 27.5,37 Z" fill="none" stroke="#9c9d9f" stroke-width="1.9" stroke-linejoin="round"/><path d="M30.8,18.5 Q26.5,21 26.5,25.5 Q27,28.5 28.8,30.5 Q32,28 32.2,24 Q32,20.5 30.8,18.5 Z" fill="none" stroke="#9c9d9f" stroke-width="1.9" stroke-linejoin="round"/><path d="M37.5,26.5 Q31.5,27.5 30,33 L29.8,37 Q35,37 37,31.5 Q37.8,29 37.5,26.5 Z" fill="none" stroke="#9c9d9f" stroke-width="1.9" stroke-linejoin="round"/></svg>
<svg style="position:absolute;left:1598px;top:482px" width="44" height="44" viewBox="0 0 44 44"><path d="M17,37 L17,33 Q17,31.5 15,30 Q8.5,26 8.5,19.5 Q8.5,6.8 22,6.8 Q35.5,6.8 35.5,19.5 Q35.5,26.5 29,30.5 Q27,31.5 27,33 L27,37 Z" fill="none" stroke="#9c9d9f" stroke-width="1.9" stroke-linejoin="round"/><path d="M22,10.5 L14.5,22.8 L20,22.8 L22,31 L29.5,18.7 L24.2,18.7 Z" fill="none" stroke="#9c9d9f" stroke-width="1.8" stroke-linejoin="round"/></svg>
<svg style="position:absolute;left:1600px;top:1280px" width="40" height="16"><circle cx="8.2" cy="8.3" r="3.3" fill="none" stroke="#9b9b9b" stroke-width="1.6"/><circle cx="20" cy="8.3" r="3.3" fill="none" stroke="#9b9b9b" stroke-width="1.6"/><circle cx="32" cy="8.3" r="3.3" fill="none" stroke="#9b9b9b" stroke-width="1.6"/></svg>
<div style="position:absolute;left:7px;top:1280px;width:1533px;height:1px;background:#e0e2e7"></div>
<div style="position:absolute;left:244px;top:1280px;width:144px;height:41px;background:#e8e9ed"></div>
<div style="position:absolute;left:388px;top:1280px;width:142px;height:41px;background:#fff"></div>
<div style="position:absolute;left:278px;top:1285px;white-space:nowrap;font-family:'Liberation Sans',sans-serif;font-size:26.5px;line-height:38px;color:#3b4559;letter-spacing:-1px;transform:scaleY(1.06);transform-origin:0 27px;">Sheet1</div>
<div style="position:absolute;left:419px;top:1285px;white-space:nowrap;font-family:'Liberation Sans',sans-serif;font-size:26.5px;line-height:38px;color:#1eb17a;font-weight:bold;letter-spacing:-0.8px;transform:scaleY(1.06);transform-origin:0 27px;">Sheet2</div>
<svg style="position:absolute;left:30px;top:1286px" width="190" height="32"><path d="M10,4 L10,27.5 M27,4 L15,15.7 L27,27.5" fill="none" stroke="#a3a3a3" stroke-width="2"/><path d="M75,4 L63,15.7 L75,27.5" fill="none" stroke="#a3a3a3" stroke-width="2"/><path d="M115,4 L127,15.7 L115,27.5" fill="none" stroke="#a3a3a3" stroke-width="2"/><path d="M163,4 L175,15.7 L163,27.5 M180,4 L180,27.5" fill="none" stroke="#a3a3a3" stroke-width="2"/></svg>
<svg style="position:absolute;left:535px;top:1285px" width="40" height="36"><path d="M7,18 L33,18 M20,5 L20,31" stroke="#2f3a4c" stroke-width="2.2"/></svg>
<div style="position:absolute;left:903px;top:1292px;width:1px;height:20px;background:#7d88a0"></div>
<div style="position:absolute;left:907px;top:1292px;width:1px;height:20px;background:#7d88a0"></div>
<div style="position:absolute;left:920px;top:1288px;width:591px;height:28px;background:#e9eaee"></div>
<svg style="position:absolute;left:930px;top:1292px" width="20" height="20"><polygon points="5,10 12,4.5 12,15.5" fill="#8a96b0"/></svg>
<div style="position:absolute;left:961px;top:1289px;width:349px;height:26px;background:#d4d7df;border-radius:13px"></div>
<svg style="position:absolute;left:1482px;top:1292px" width="20" height="20"><polygon points="15,10 8,4.5 8,15.5" fill="#8a96b0"/></svg>
<div style="position:absolute;left:1522px;top:1292px;width:1px;height:20px;background:#7d88a0"></div>
<div style="position:absolute;left:1526px;top:1292px;width:1px;height:20px;background:#7d88a0"></div>
</body></html>
